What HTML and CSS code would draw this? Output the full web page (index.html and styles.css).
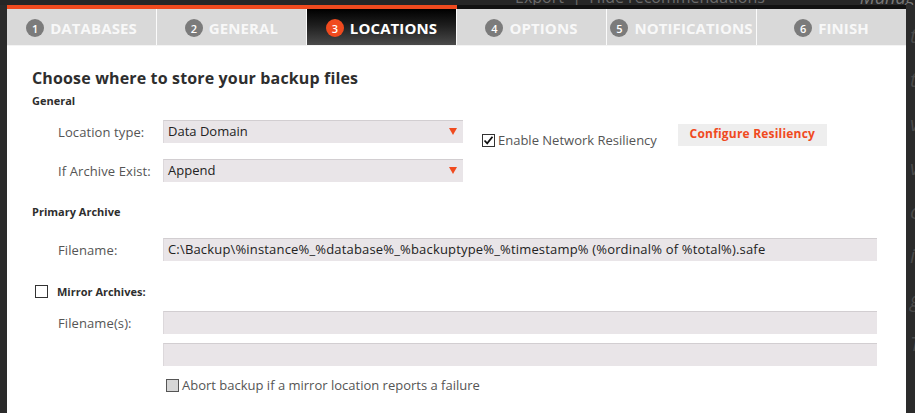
FILE: index.html
```html
<!DOCTYPE html>
<html>
<head>
<meta charset="utf-8">
<link rel="stylesheet" href="styles.css">
</head>
<body>
<div class="backdrop-top"><span class="bg-text">Export &nbsp;|&nbsp; Hide recommendations</span><span class="bg-text bg-italic">Managed Ins</span></div>
<div class="page">
  <div class="dialog">
    <div class="progress"><div class="progress-fill"></div></div>
    <div class="tabs">
      <div class="tab"><span class="num">1</span><span class="tab-label">DATABASES</span></div>
      <div class="tab"><span class="num">2</span><span class="tab-label">GENERAL</span></div>
      <div class="tab active"><span class="num">3</span><span class="tab-label">LOCATIONS</span></div>
      <div class="tab"><span class="num">4</span><span class="tab-label">OPTIONS</span></div>
      <div class="tab"><span class="num">5</span><span class="tab-label">NOTIFICATIONS</span></div>
      <div class="tab"><span class="num">6</span><span class="tab-label">FINISH</span></div>
    </div>
    <div class="content">
      <h1 class="title">Choose where to store your backup files</h1>
      <h2 class="section">General</h2>

      <div class="general">
        <div class="selects">
          <div class="row">
            <span class="label">Location type:</span>
            <div class="select"><span>Data Domain</span><span class="arrow"></span></div>
          </div>
          <div class="row">
            <span class="label">If Archive Exist:</span>
            <div class="select"><span>Append</span><span class="arrow"></span></div>
          </div>
        </div>
        <div class="resiliency">
          <label class="check-line"><span class="box checked"><svg width="11" height="11" viewBox="0 0 11 11"><path d="M1.5 5.5 L4.2 8.3 L9.5 1.8" fill="none" stroke="#111" stroke-width="1.8"/></svg></span>Enable Network Resiliency</label>
          <span class="btn">Configure Resiliency</span>
        </div>
      </div>

      <h2 class="section primary">Primary Archive</h2>
      <div class="row wide">
        <span class="label">Filename:</span>
        <div class="input">C:\Backup\%instance%_%database%_%backuptype%_%timestamp% (%ordinal% of %total%).safe</div>
      </div>

      <div class="mirror">
        <span class="box"></span><span class="mirror-label">Mirror Archives:</span>
      </div>
      <div class="row wide">
        <span class="label">Filename(s):</span>
        <div class="input"></div>
      </div>
      <div class="row wide second">
        <span class="label"></span>
        <div class="input"></div>
      </div>
      <div class="abort">
        <span class="box gray"></span><span>Abort backup if a mirror location reports a failure</span>
      </div>
    </div>
  </div>
  <div class="side"><span>t</span><span>t</span><span>v</span><span>v</span><span>c</span><span>ic</span><span>g</span><span>T</span></div>
</div>
</body>
</html>
```
FILE: styles.css
```css
* { box-sizing: border-box; }
html, body { margin: 0; padding: 0; }
body {
  background: #2b2b2b;
  font-family: "Open Sans", "Liberation Sans", sans-serif;
  width: 915px;
  height: 413px;
  overflow: hidden;
}
.backdrop-top {
  height: 5px;
  background: #262626;
  overflow: hidden;
  position: relative;
  padding-left: 515px;
  display: flex;
  gap: 95px;
}
.bg-text {
  font-size: 16px;
  line-height: 16px;
  margin-top: -11px;
  color: #6a6a6a;
  white-space: nowrap;
}
.bg-italic { font-style: italic; font-size: 18px; color: #777; }
.page {
  display: flex;
  height: 408px;
}
.dialog {
  margin-left: 7px;
  width: 899px;
  background: #fff;
  display: flex;
  flex-direction: column;
}
.side {
  flex: 1;
  display: flex;
  flex-direction: column;
  padding-top: 20px;
  gap: 22px;
  color: #4a4a4a;
  font-style: italic;
  font-size: 20px;
  line-height: 22px;
  overflow: hidden;
  padding-left: 4px;
}
.progress {
  height: 4px;
  background: #111;
}
.progress-fill {
  width: 50%;
  height: 4px;
  background: #f04a1e;
}
.tabs {
  display: flex;
  height: 37px;
  border-bottom: 1px solid #f4f4f4;
}
.tab {
  flex: 1;
  display: flex;
  align-items: center;
  justify-content: center;
  gap: 6px;
  background: #d9d9d9;
  border-left: 1px solid #fbfbfb;
  color: #f8f8f8;
  font-family: "Open Sans", sans-serif;
  font-weight: 700;
  font-size: 15px;
  letter-spacing: 0.1px;
  padding-top: 2px;
}
.tab:first-child { border-left: none; }
.num {
  width: 18px;
  height: 18px;
  border-radius: 50%;
  background: #7b7b7b;
  color: #fff;
  font-size: 11px;
  font-weight: 600;
  display: flex;
  align-items: center;
  justify-content: center;
}
.tab.active {
  background: linear-gradient(#000 0%, #1e1e1e 45%, #4a4a4a 100%);
  color: #fff;
}
.tab.active .num { background: #f04a1e; }
.content {
  padding: 21px 0 0 25px;
  color: #333;
}
.title {
  margin: 0;
  font-size: 16px;
  font-weight: 700;
  line-height: 22px;
  letter-spacing: 0.15px;
  color: #2e2e2e;
}
.section {
  margin: 4px 0 0 0;
  font-size: 11px;
  font-weight: 700;
  line-height: 16px;
  color: #2e2e2e;
}
.general {
  display: flex;
  margin-top: 11px;
}
.selects {
  display: flex;
  flex-direction: column;
  gap: 16px;
}
.row {
  display: flex;
  align-items: center;
  padding-left: 26px;
}
.label {
  width: 105px;
  flex: none;
  font-size: 13px;
  color: #555;
  letter-spacing: 0.1px;
}
.select {
  width: 300px;
  height: 23px;
  background: #e9e5e8;
  border-top: 1px solid #d2ced1;
  border-left: 1px solid #dcd8db;
  display: flex;
  align-items: center;
  justify-content: space-between;
  padding: 0 6px 0 4px;
  font-size: 13px;
  color: #222;
}
.select span:first-child { margin-top: -3px; }
.arrow {
  width: 0;
  height: 0;
  border-left: 4px solid transparent;
  border-right: 4px solid transparent;
  border-top: 7px solid #f04a1e;
  margin-top: -2px;
}
.resiliency {
  display: flex;
  align-items: flex-start;
  margin-left: 19px;
}
.check-line {
  display: flex;
  align-items: center;
  gap: 3px;
  font-size: 13px;
  color: #555;
  margin-top: 11px;
}
.box {
  width: 13px;
  height: 13px;
  border: 1px solid #333;
  background: #fff;
  display: inline-flex;
  align-items: center;
  justify-content: center;
  flex: none;
}
.btn {
  margin-left: 21px;
  margin-top: 4px;
  width: 149px;
  height: 22px;
  background: #eeeeee;
  color: #f04a1e;
  font-weight: 700;
  font-size: 12px;
  letter-spacing: 0.2px;
  display: flex;
  align-items: center;
  justify-content: center;
  padding-bottom: 3px;
}
.primary { margin-top: 22px; }
.wide { margin-top: 18px; }
.input {
  width: 714px;
  height: 23px;
  background: #e9e5e8;
  border-top: 1px solid #d2ced1;
  border-left: 1px solid #dcd8db;
  font-size: 13px;
  letter-spacing: 0.17px;
  color: #222;
  padding: 1px 0 0 4px;
  line-height: 18px;
  white-space: nowrap;
}
.mirror {
  display: flex;
  align-items: center;
  gap: 9px;
  margin-top: 23px;
  padding-left: 3px;
}
.mirror-label {
  font-size: 11px;
  font-weight: 700;
  color: #2e2e2e;
}
.mirror + .row.wide { margin-top: 12px; }
.second { margin-top: 9px; }
.abort {
  display: flex;
  align-items: center;
  gap: 3px;
  margin-top: 10px;
  padding-left: 134px;
  font-size: 13px;
  color: #555;
}
.box.gray { background: #d6d6d6; border-color: #555; }
```
